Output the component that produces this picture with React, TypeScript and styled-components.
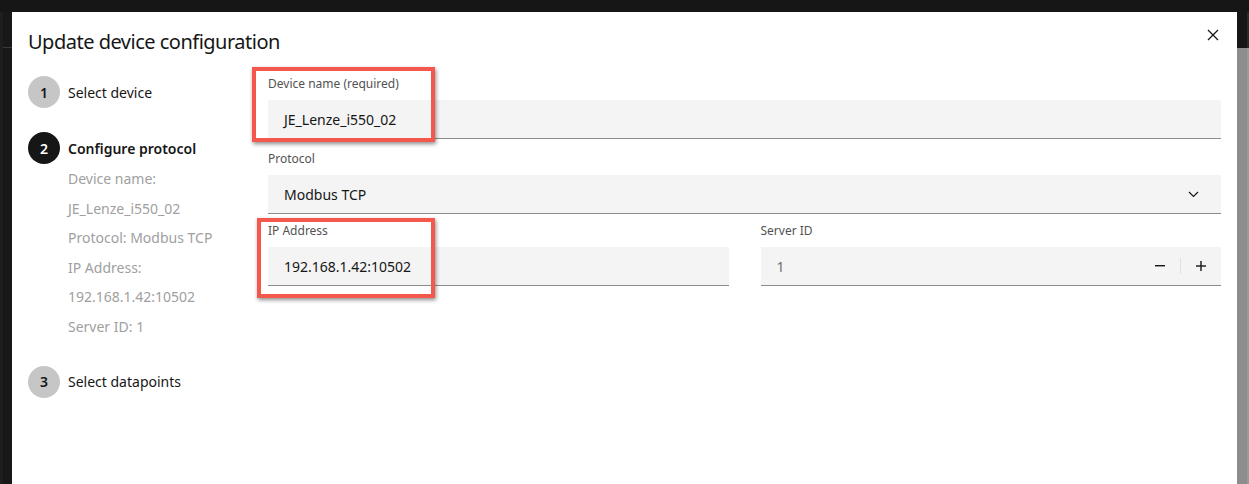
import React from "react";
import styled, { createGlobalStyle } from "styled-components";

const GlobalStyle = createGlobalStyle`
  html, body {
    margin: 0;
    padding: 0;
    background: #161616;
    font-family: "Noto Sans", "Liberation Sans", sans-serif;
    overflow: hidden;
  }
`;

const StyledPage = styled.div`
  display: grid;
  grid-template-rows: 12px 472px;
  width: 1249px;
  height: 484px;
  background: #161616;
`;

const StyledBody = styled.div`
  display: grid;
  grid-template-columns: 12px 1fr 12px;
`;

const StyledLeftEdge = styled.div`
  background: #181818;
  border-left: 3px solid #1e1e1e;
  box-shadow: inset 0 35px 0 #181818, inset 0 36px 0 #3a3a3a;
`;

const StyledRightEdge = styled.div`
  display: flex;
  flex-direction: column;
`;

const StyledEdgePart = styled.div<{ $tone: "dark" | "gray" }>`
  height: ${({ $tone }) => ($tone === "dark" ? "36px" : "auto")};
  flex: ${({ $tone }) => ($tone === "dark" ? "none" : "1")};
  background: ${({ $tone }) => ($tone === "dark" ? "#161616" : "#8d8d8d")};
  border-right: 2px solid ${({ $tone }) => ($tone === "dark" ? "#2a2a2a" : "#9a9a9a")};
`;

const StyledModal = styled.div`
  background: #ffffff;
  padding: 16px 16px 0 16px;
  color: #161616;
`;

const StyledHeader = styled.div`
  display: flex;
  justify-content: space-between;
  align-items: flex-start;
  height: 28px;
`;

const StyledTitle = styled.h2`
  margin: 0;
  font-size: 20px;
  line-height: 28px;
  font-weight: 400;
  letter-spacing: -0.5px;
`;

const StyledClose = styled.button`
  display: flex;
  align-items: center;
  justify-content: center;
  width: 20px;
  height: 20px;
  margin: -3px -2px 0 0;
  padding: 0;
  border: 0;
  background: transparent;
  color: #161616;
`;

const StyledContent = styled.div`
  display: grid;
  grid-template-columns: 240px 1fr;
  margin-top: 20px;
`;

const StyledSteps = styled.ol`
  list-style: none;
  margin: 0;
  padding: 0;
  display: flex;
  flex-direction: column;
  gap: 24px;
`;

const StyledStep = styled.li`
  display: flex;
  flex-direction: column;
`;

const StyledStepHead = styled.div`
  display: flex;
  align-items: center;
  gap: 8px;
  height: 32px;
`;

const StyledBadge = styled.span<{ $active: boolean }>`
  display: flex;
  align-items: center;
  justify-content: center;
  width: 32px;
  height: 32px;
  border-radius: 50%;
  background: ${({ $active }) => ($active ? "#161616" : "#c6c6c6")};
  color: ${({ $active }) => ($active ? "#ffffff" : "#161616")};
  font-size: 14px;
  font-weight: 600;
`;

const StyledStepLabel = styled.span<{ $active: boolean }>`
  font-size: 14px;
  font-weight: ${({ $active }) => ($active ? 600 : 400)};
  color: #161616;
`;

const StyledSummary = styled.div`
  display: flex;
  flex-direction: column;
  padding-left: 40px;
`;

const StyledSummaryLine = styled.span`
  font-size: 14px;
  line-height: 29.6px;
  color: #a0a0a0;
`;

const StyledForm = styled.div`
  display: flex;
  flex-direction: column;
`;

const StyledRow = styled.div<{ $top: number }>`
  display: grid;
  grid-template-columns: 1fr 1fr;
  gap: 32px;
  margin-top: ${({ $top }) => $top}px;
`;

const StyledField = styled.div<{ $top?: number }>`
  position: relative;
  display: flex;
  flex-direction: column;
  margin-top: ${({ $top }) => $top ?? 0}px;
`;

const StyledLabel = styled.label`
  font-size: 12px;
  line-height: 16px;
  color: #525252;
  margin-bottom: 8px;
`;

const StyledInput = styled.div<{ $muted?: boolean }>`
  display: flex;
  align-items: center;
  height: 38px;
  padding: 0 16px;
  background: #f4f4f4;
  border-bottom: 1px solid #8d8d8d;
  font-size: 14px;
  color: ${({ $muted }) => ($muted ? "#6f6f6f" : "#161616")};
`;

const StyledValue = styled.span`
  flex: 1;
`;

const StyledChevron = styled.span`
  display: flex;
  margin-right: 6px;
`;

const StyledStepper = styled.div`
  display: flex;
  align-items: center;
  margin-right: -16px;
`;

const StyledStepperButton = styled.span`
  display: flex;
  align-items: center;
  justify-content: center;
  width: 20px;
  height: 38px;
  margin: 0 10px;
  color: #161616;
`;

const StyledDivider = styled.span`
  width: 1px;
  height: 16px;
  background: #e0e0e0;
`;

const StyledHighlight = styled.div<{ $left: number; $top: number; $width: number; $height: number }>`
  position: absolute;
  left: ${({ $left }) => $left}px;
  top: ${({ $top }) => $top}px;
  width: ${({ $width }) => $width}px;
  height: ${({ $height }) => $height}px;
  box-sizing: border-box;
  border: 4px solid #f4584c;
  box-shadow: 1px 2px 4px rgba(0, 0, 0, 0.45);
  pointer-events: none;
`;

const CloseIcon = () => (
  <svg width="12" height="12" viewBox="0 0 12 12" fill="none" stroke="#161616" strokeWidth="1.3">
    <path d="M1 1 L11 11 M11 1 L1 11" />
  </svg>
);

const ChevronIcon = () => (
  <svg width="11" height="7" viewBox="0 0 11 7" fill="none" stroke="#161616" strokeWidth="1.2">
    <path d="M1 1 L5.5 5.5 L10 1" />
  </svg>
);

const MinusIcon = () => (
  <svg width="10" height="2" viewBox="0 0 10 2">
    <rect x="0" y="0" width="10" height="1.4" fill="#161616" />
  </svg>
);

const PlusIcon = () => (
  <svg width="10" height="10" viewBox="0 0 10 10">
    <rect x="0" y="4.3" width="10" height="1.4" fill="#161616" />
    <rect x="4.3" y="0" width="1.4" height="10" fill="#161616" />
  </svg>
);

const summary = [
  "Device name:",
  "JE_Lenze_i550_02",
  "Protocol: Modbus TCP",
  "IP Address:",
  "192.168.1.42:10502",
  "Server ID: 1",
];

const App: React.FunctionComponent = () => (
  <>
    <GlobalStyle />
    <StyledPage>
      <div />
      <StyledBody>
        <StyledLeftEdge />
        <StyledModal>
          <StyledHeader>
            <StyledTitle>Update device configuration</StyledTitle>
            <StyledClose aria-label="Close">
              <CloseIcon />
            </StyledClose>
          </StyledHeader>
          <StyledContent>
            <StyledSteps>
              <StyledStep>
                <StyledStepHead>
                  <StyledBadge $active={false}>1</StyledBadge>
                  <StyledStepLabel $active={false}>Select device</StyledStepLabel>
                </StyledStepHead>
              </StyledStep>
              <StyledStep>
                <StyledStepHead>
                  <StyledBadge $active>2</StyledBadge>
                  <StyledStepLabel $active>Configure protocol</StyledStepLabel>
                </StyledStepHead>
                <StyledSummary>
                  {summary.map((line) => (
                    <StyledSummaryLine key={line}>{line}</StyledSummaryLine>
                  ))}
                </StyledSummary>
              </StyledStep>
              <StyledStep>
                <StyledStepHead>
                  <StyledBadge $active={false}>3</StyledBadge>
                  <StyledStepLabel $active={false}>Select datapoints</StyledStepLabel>
                </StyledStepHead>
              </StyledStep>
            </StyledSteps>

            <StyledForm>
              <StyledField>
                <StyledLabel>Device name (required)</StyledLabel>
                <StyledInput>JE_Lenze_i550_02</StyledInput>
                <StyledHighlight $left={-16} $top={-9} $width={183} $height={75} />
              </StyledField>
              <StyledField $top={12}>
                <StyledLabel>Protocol</StyledLabel>
                <StyledInput>
                  <StyledValue>Modbus TCP</StyledValue>
                  <StyledChevron>
                    <ChevronIcon />
                  </StyledChevron>
                </StyledInput>
              </StyledField>
              <StyledRow $top={9}>
                <StyledField>
                  <StyledLabel>IP Address</StyledLabel>
                  <StyledInput>192.168.1.42:10502</StyledInput>
                  <StyledHighlight $left={-11} $top={-5} $width={178} $height={80} />
                </StyledField>
                <StyledField>
                  <StyledLabel>Server ID</StyledLabel>
                  <StyledInput $muted>
                    <StyledValue>1</StyledValue>
                    <StyledStepper>
                      <StyledStepperButton>
                        <MinusIcon />
                      </StyledStepperButton>
                      <StyledDivider />
                      <StyledStepperButton>
                        <PlusIcon />
                      </StyledStepperButton>
                    </StyledStepper>
                  </StyledInput>
                </StyledField>
              </StyledRow>
            </StyledForm>
          </StyledContent>
        </StyledModal>
        <StyledRightEdge>
          <StyledEdgePart $tone="dark" />
          <StyledEdgePart $tone="gray" />
        </StyledRightEdge>
      </StyledBody>
    </StyledPage>
  </>
);

export default App;
